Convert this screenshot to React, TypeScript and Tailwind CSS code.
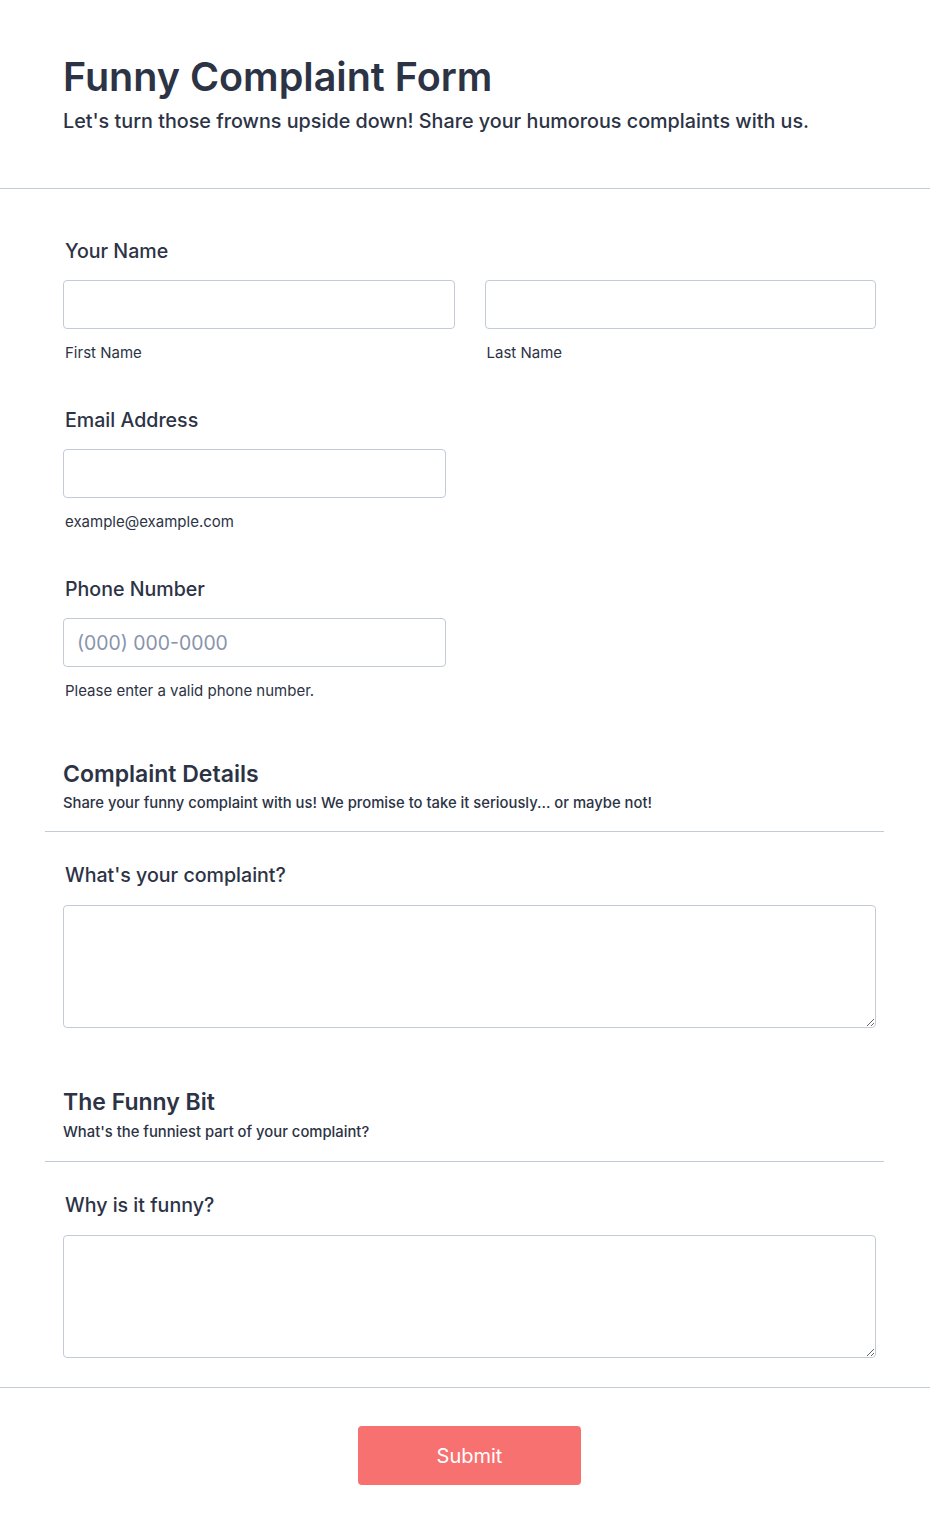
import React from 'react'

const ink = 'text-[#2c3345]'

function Label({ children }: { children: React.ReactNode }) {
  return <div className={`pl-[2px] text-[19.6px] font-medium leading-[28px] ${ink}`}>{children}</div>
}

function Sub({ children }: { children: React.ReactNode }) {
  return <div className={`mt-[14px] pl-[2px] text-[15px] leading-[20px] ${ink}`}>{children}</div>
}

function TextInput({ placeholder, className = '' }: { placeholder?: string; className?: string }) {
  return (
    <input
      type="text"
      placeholder={placeholder}
      className={`h-[49px] rounded-[4px] border border-[#c3cad8] bg-white px-[13px] text-[19.4px] text-[#2c3345] outline-none placeholder:text-[#8894ab] ${className}`}
    />
  )
}

function SectionHead({ title, desc, pad, gap }: { title: string; desc: string; pad: string; gap: string }) {
  return (
    <div className={`ml-[45px] mr-[46px] border-b border-[#c3cad8] px-[18px] ${pad}`}>
      <h2 className={`text-[23px] font-semibold leading-[30px] ${ink}`}>{title}</h2>
      <p className={`${gap} text-[14.8px] font-medium leading-[20px] ${ink}`}>{desc}</p>
    </div>
  )
}

function Resizable() {
  return (
    <textarea className="mt-[16px] block h-[123px] w-full resize-y rounded-[4px] border border-[#c3cad8] px-[14px] py-[10px] text-[18px] text-[#2c3345] outline-none" />
  )
}

export default function App() {
  return (
    <div className="min-h-screen bg-white font-['Inter','Noto_Sans',sans-serif]">
      <header className="border-b border-[#c3cad8] pb-[53px] pl-[63px] pr-[54px] pt-[53px]">
        <h1 className={`text-[39.5px] font-semibold leading-[48px] ${ink}`}>Funny Complaint Form</h1>
        <p className={`mt-[6px] text-[19.75px] font-medium leading-[28px] ${ink}`}>
          Let's turn those frowns upside down! Share your humorous complaints with us.
        </p>
      </header>

      <div className="pl-[63px] pr-[54px] pt-[48px]">
        <Label>Your Name</Label>
        <div className="mt-[15px] grid grid-cols-2 gap-[30px]">
          <div className="flex flex-col">
            <TextInput className="w-full" />
            <Sub>First Name</Sub>
          </div>
          <div className="flex flex-col">
            <TextInput className="w-full" />
            <Sub>Last Name</Sub>
          </div>
        </div>

        <div className="mt-[43px]">
          <Label>Email Address</Label>
          <TextInput className="mt-[15px] w-[383px]" />
          <Sub>example@example.com</Sub>
        </div>

        <div className="mt-[43px]">
          <Label>Phone Number</Label>
          <TextInput placeholder="(000) 000-0000" className="mt-[15px] w-[383px]" />
          <Sub>Please enter a valid phone number.</Sub>
        </div>
      </div>

      <SectionHead
        title="Complaint Details"
        desc="Share your funny complaint with us! We promise to take it seriously... or maybe not!"
        pad="pt-[58px] pb-[18px]"
        gap="mt-[4px]"
      />

      <div className="pl-[63px] pr-[54px] pt-[29px]">
        <Label>What's your complaint?</Label>
        <Resizable />
      </div>

      <SectionHead
        title="The Funny Bit"
        desc="What's the funniest part of your complaint?"
        pad="pt-[59px] pb-[19px]"
        gap="mt-[5px]"
      />

      <div className="border-b border-[#c3cad8] pb-[29px] pl-[63px] pr-[54px] pt-[29px]">
        <Label>Why is it funny?</Label>
        <Resizable />
      </div>

      <div className="flex justify-center pb-[48px] pl-[63px] pr-[54px] pt-[38px]">
        <button
          type="button"
          className="h-[59px] w-[223px] rounded-[4px] bg-[#f87171] text-[20px] font-normal text-white"
        >
          Submit
        </button>
      </div>
    </div>
  )
}
